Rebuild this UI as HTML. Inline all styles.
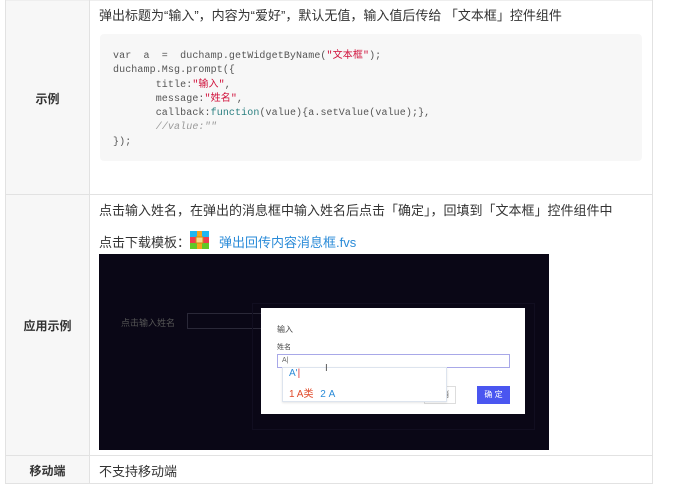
<!DOCTYPE html>
<html><head><meta charset="utf-8"><style>
*{margin:0;padding:0;box-sizing:border-box}
body{width:699px;height:484px;background:#fff;position:relative;overflow:hidden;font-family:"Liberation Sans","Noto Sans CJK SC",sans-serif;font-size:13px;color:#333}
.a{position:absolute}
.lc{background:#f7f7f7;left:5px;width:85px}
.hl{height:1px;background:#e2e2e2;left:5px;width:648px}
.vl{width:1px;background:#e2e2e2}
.lbl{left:5px;width:85px;text-align:center;font-weight:bold;font-size:12px;color:#333}
.code{left:100px;top:34px;width:542px;height:127px;background:#f7f7f7;border-radius:4px}
pre{position:absolute;left:113px;top:50px;font-family:"Liberation Mono","Noto Sans CJK SC",monospace;font-size:10px;line-height:14.3px;color:#555;letter-spacing:0.1px}
.s{color:#d0103a}.k{color:#2a7f80}.c{color:#999;font-style:italic}
</style></head><body>
<div class="a lc" style="top:0;height:484px"></div>
<div class="a hl" style="top:0;background:#eee"></div>
<div class="a hl" style="top:194px"></div>
<div class="a hl" style="top:455px"></div>
<div class="a hl" style="top:483px"></div>
<div class="a vl" style="left:5px;top:0;height:484px"></div>
<div class="a vl" style="left:89px;top:0;height:484px"></div>
<div class="a vl" style="left:652px;top:0;height:484px"></div>
<div class="a lbl" style="top:90px">示例</div>
<div class="a lbl" style="top:317px">应用示例</div>
<div class="a lbl" style="top:462px">移动端</div>
<div class="a" style="left:99px;top:5px">弹出标题为“输入”，内容为“爱好”，默认无值，输入值后传给 「文本框」控件组件</div>
<div class="a code"></div>
<pre>var  a  =  duchamp.getWidgetByName(<span class="s">"文本框"</span>);
duchamp.Msg.prompt({
       title:<span class="s">"输入"</span>,
       message:<span class="s">"姓名"</span>,
       callback:<span class="k">function</span>(value){a.setValue(value);},
       <span class="c">//value:""</span>
});</pre>
<div class="a" style="left:99px;top:200px">点击输入姓名，在弹出的消息框中输入姓名后点击「确定」，回填到「文本框」控件组件中</div>
<div class="a" style="left:99px;top:232px">点击下载模板：</div>
<svg class="a" style="left:190px;top:231px" width="19" height="18"><rect width="19" height="18" rx="2" fill="#f03c4f"/><rect width="19" height="6" fill="#1fb6f0"/><rect y="12" width="19" height="6" fill="#62c828"/><rect x="7" width="5" height="18" fill="#f7a61b"/><rect x="6" y="6" width="7" height="6" fill="#f8d88a" stroke="#d08a10"/></svg>
<div class="a" style="left:219px;top:232px;color:#2a8bd8">弹出回传内容消息框.fvs</div>
<div class="a" style="left:99px;top:254px;width:450px;height:196px;background:#0a0716"></div>
<div class="a" style="left:121px;top:316px;font-size:9px;color:#555">点击输入姓名</div>
<div class="a" style="left:187px;top:313px;width:80px;height:16px;border:1px solid #2a2838"></div>
<div class="a" style="left:252px;top:303px;width:283px;height:127px;border:1px solid #110e20"></div>
<div class="a" style="left:261px;top:308px;width:264px;height:106px;background:#fff"></div>
<div class="a" style="left:277px;top:324px;font-size:8px;color:#444">输入</div>
<div class="a" style="left:277px;top:342px;font-size:7px;color:#444">姓名</div>
<div class="a" style="left:277px;top:354px;width:233px;height:14px;border:1px solid #a8a8e8;font-size:7px;color:#666;padding:2px 4px">A|</div>
<div class="a" style="left:424px;top:386px;width:32px;height:18px;border:1px solid #ddd;font-size:8px;color:#666;text-align:center;line-height:16px">取 消</div>
<div class="a" style="left:477px;top:386px;width:33px;height:18px;background:#4a56f0;font-size:8px;color:#fff;text-align:center;line-height:18px">确 定</div>
<div class="a" style="left:282px;top:367px;width:165px;height:35px;background:#fff;border:1px solid #dde4ee;box-shadow:0 1px 2px rgba(0,0,0,.1)"></div>
<div class="a" style="left:289px;top:368px;font-size:10px;color:#2a8bd8">A'<span style="color:#d33">|</span></div>
<div class="a" style="left:289px;top:385px;font-size:10px;color:#e04a2a">1 A类 <span style="color:#2a8bd8;margin-left:4px">2 A</span></div>
<div class="a" style="left:325px;top:363px;font-size:10px;color:#555">I</div>
<div class="a" style="left:99px;top:461px">不支持移动端</div>
</body></html>
